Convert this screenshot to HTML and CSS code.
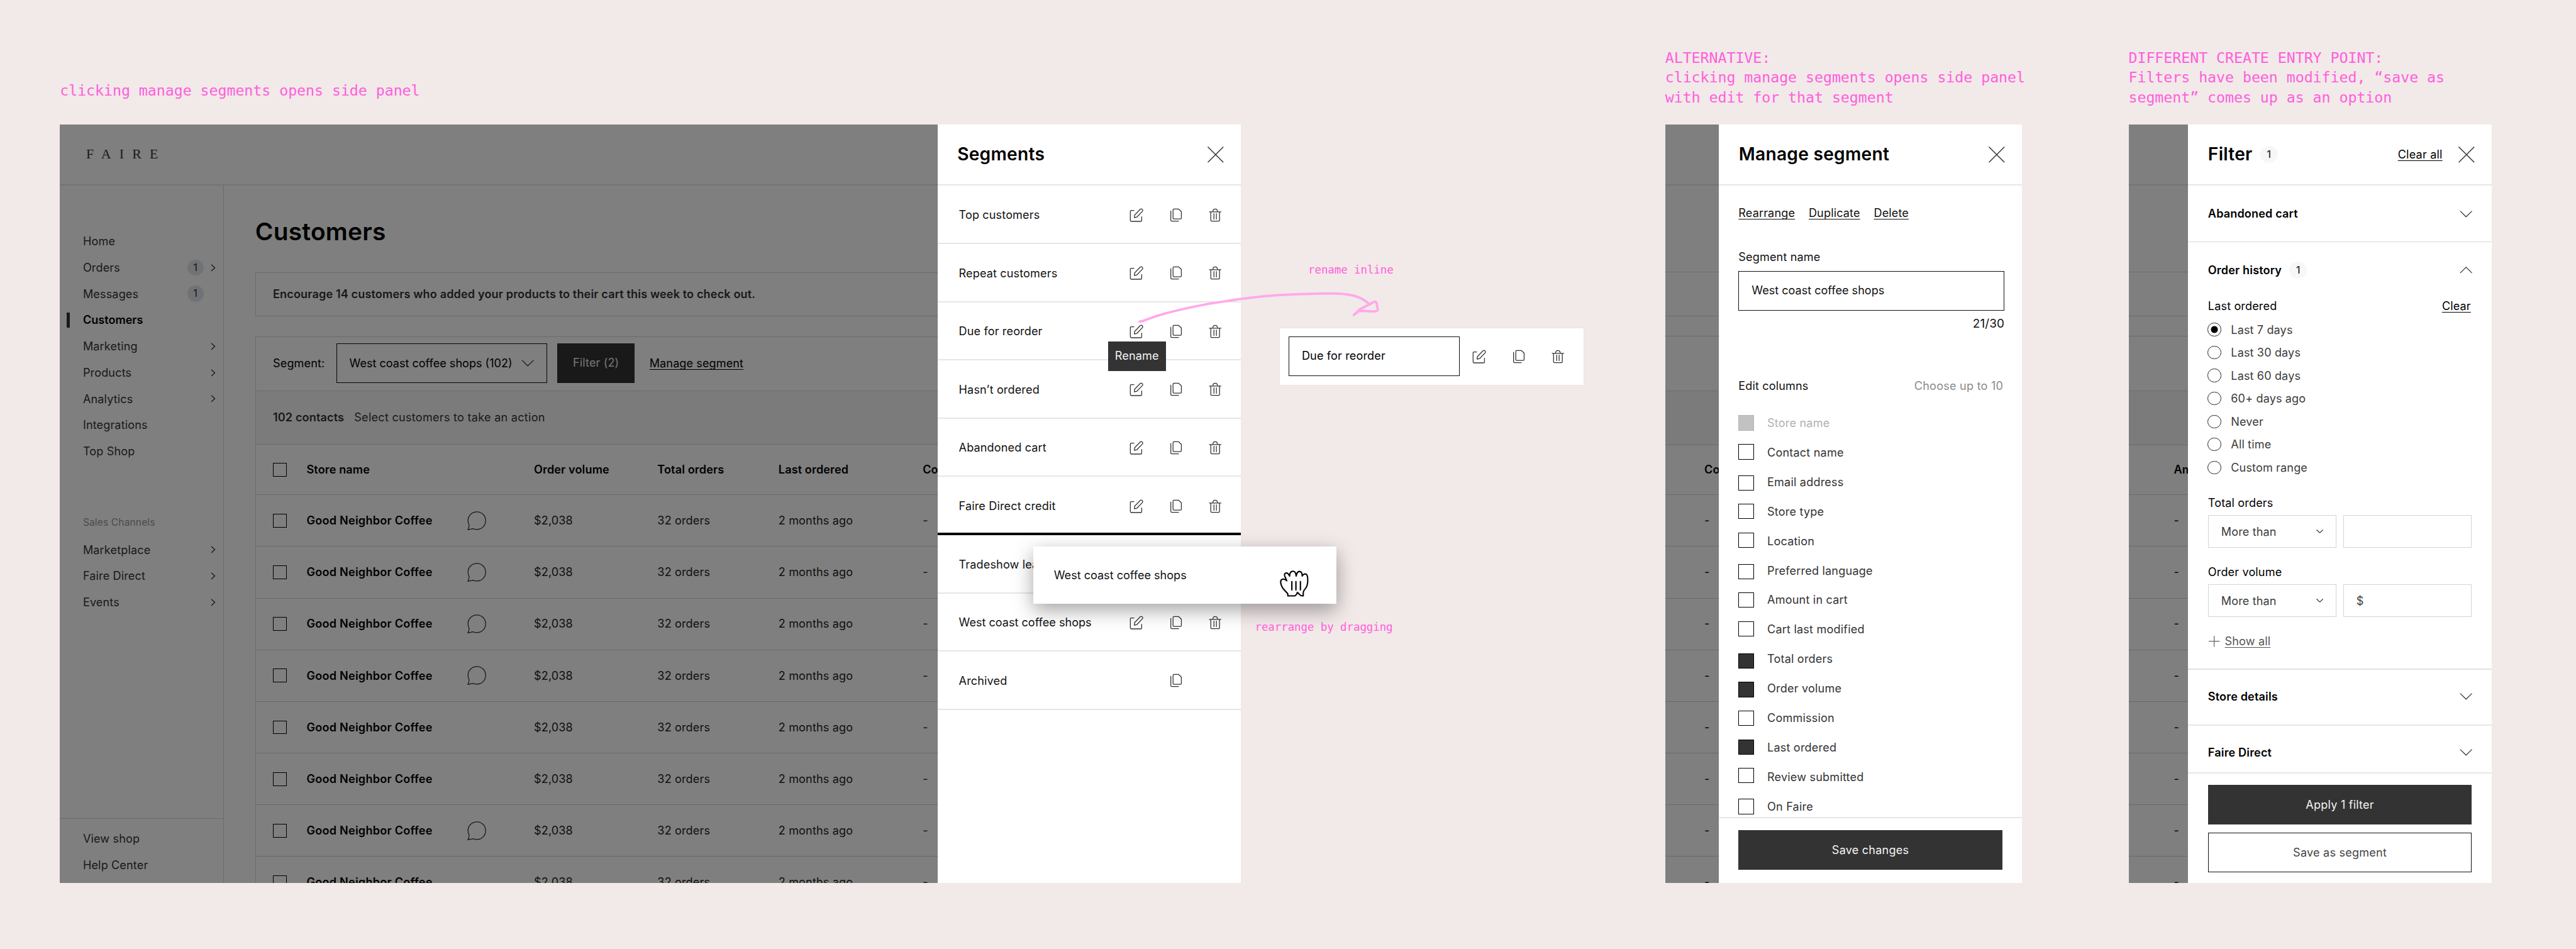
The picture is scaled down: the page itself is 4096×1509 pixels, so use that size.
FILE: index.html
```html
<!DOCTYPE html>
<html lang="en">
<head>
<meta charset="utf-8">
<title>Segments – side panel explorations</title>
<link rel="stylesheet" href="styles.css">
</head>
<body>
<svg class="sprite" aria-hidden="true">
  <symbol id="edit" viewBox="0 0 70 68"><path d="M22 11H8Q4 11 4 15V60Q4 65 9 65H55Q60 65 60 61V42M24 47L25 34L52 6Q57 1 63 6Q67 11 63 16L36 44Z"/></symbol>
  <symbol id="copy" viewBox="0 0 62 68"><path d="M21 4H43L57 17V48Q57 53 52 53H21Q16 53 16 48V9Q16 4 21 4ZM5 14V59Q5 64 10 64H43"/></symbol>
  <symbol id="trash" viewBox="0 0 63 68"><path d="M3 18H60M20 18Q20 4 31.500 4Q43 4 43 18M10 18V60Q10 64 14 64H49Q53 64 53 60V18M25.500 27V54M37.500 27V54"/></symbol>
  <symbol id="close" viewBox="0 0 27 27"><path d="M.5.5L26.500 26.500M26.500.5L.5 26.500"/></symbol>
  <symbol id="right" viewBox="0 0 8 12"><path d="M1 .7L6.800 6L1 11.300"/></symbol>
  <symbol id="down" viewBox="0 0 22 12"><path d="M.5.7L11 11L21.500.7"/></symbol>
  <symbol id="up" viewBox="0 0 22 12"><path d="M.5 11.300L11 1L21.500 11.300"/></symbol>
  <symbol id="chat" viewBox="0 0 32 32"><path d="M1 31C3 27.500 3.500 25.500 2.800 22.500C1.500 19.500 1.200 18 1.200 15.500C1.400 7 8 1 16.500 1C25 1 31 7.500 31 15.800C31 24.500 24.500 30.600 16.500 30.600C14 30.600 12 30.200 10 29.300C7.500 29.200 4.500 30.800 1 31Z"/></symbol>
</svg>

<main class="canvas">

  <p class="note n1">clicking manage segments opens side panel</p>
  <p class="note n2">ALTERNATIVE:<br>clicking manage segments opens side panel<br>with edit for that segment</p>
  <p class="note n3">DIFFERENT CREATE ENTRY POINT:<br>Filters have been modified, “save as<br>segment” comes up as an option</p>

  <section class="frame f1">
    <div class="app dim">
      <header class="topbar"><span class="logo">FAIRE</span></header>
      <div class="body">
        <nav class="side">
          <ul class="nav">
            <li>Home</li>
            <li>Orders<i class="count">1</i><svg class="chev"><use href="#right"/></svg></li>
            <li>Messages<i class="count">1</i></li>
            <li class="on">Customers</li>
            <li>Marketing<svg class="chev"><use href="#right"/></svg></li>
            <li>Products<svg class="chev"><use href="#right"/></svg></li>
            <li>Analytics<svg class="chev"><use href="#right"/></svg></li>
            <li>Integrations</li>
            <li>Top Shop</li>
          </ul>
          <div class="navhead">Sales Channels</div>
          <ul class="nav">
            <li>Marketplace<svg class="chev"><use href="#right"/></svg></li>
            <li>Faire Direct<svg class="chev"><use href="#right"/></svg></li>
            <li>Events<svg class="chev"><use href="#right"/></svg></li>
          </ul>
          <ul class="nav foot"><li>View shop</li><li>Help Center</li></ul>
        </nav>
        <div class="content">
          <h1>Customers</h1>
          <div class="banner">Encourage 14 customers who added your products to their cart this week to check out.</div>
          <div class="table">
            <div class="tools">
              <span class="seglabel">Segment:</span>
              <span class="select">West coast coffee shops (102)<svg class="down"><use href="#down"/></svg></span>
              <span class="filterbtn">Filter (2)</span>
              <a class="link">Manage segment</a>
            </div>
            <div class="summary"><b>102 contacts</b><span>Select customers to take an action</span></div>
            <div class="row head"><i class="box"></i><b>Store name</b><s></s><b>Order volume</b><b>Total orders</b><b>Last ordered</b><b>Co</b></div>
            <div class="row"><i class="box"></i><b>Good Neighbor Coffee</b><svg class="chat"><use href="#chat"/></svg><span>$2,038</span><span>32 orders</span><span>2 months ago</span><span>-</span></div>
            <div class="row"><i class="box"></i><b>Good Neighbor Coffee</b><svg class="chat"><use href="#chat"/></svg><span>$2,038</span><span>32 orders</span><span>2 months ago</span><span>-</span></div>
            <div class="row"><i class="box"></i><b>Good Neighbor Coffee</b><svg class="chat"><use href="#chat"/></svg><span>$2,038</span><span>32 orders</span><span>2 months ago</span><span>-</span></div>
            <div class="row"><i class="box"></i><b>Good Neighbor Coffee</b><svg class="chat"><use href="#chat"/></svg><span>$2,038</span><span>32 orders</span><span>2 months ago</span><span>-</span></div>
            <div class="row"><i class="box"></i><b>Good Neighbor Coffee</b><s></s><span>$2,038</span><span>32 orders</span><span>2 months ago</span><span>-</span></div>
            <div class="row"><i class="box"></i><b>Good Neighbor Coffee</b><s></s><span>$2,038</span><span>32 orders</span><span>2 months ago</span><span>-</span></div>
            <div class="row"><i class="box"></i><b>Good Neighbor Coffee</b><svg class="chat"><use href="#chat"/></svg><span>$2,038</span><span>32 orders</span><span>2 months ago</span><span>-</span></div>
            <div class="row"><i class="box"></i><b>Good Neighbor Coffee</b><s></s><span>$2,038</span><span>32 orders</span><span>2 months ago</span><span>-</span></div>
          </div>
        </div>
      </div>
    </div>
    <aside class="panel segments">
      <header class="phead"><h2>Segments</h2><svg class="x"><use href="#close"/></svg></header>
      <div class="seg"><span>Top customers</span><svg class="e"><use href="#edit"/></svg><svg class="c"><use href="#copy"/></svg><svg class="t"><use href="#trash"/></svg></div>
      <div class="seg"><span>Repeat customers</span><svg class="e"><use href="#edit"/></svg><svg class="c"><use href="#copy"/></svg><svg class="t"><use href="#trash"/></svg></div>
      <div class="seg"><span>Due for reorder</span><svg class="e"><use href="#edit"/></svg><svg class="c"><use href="#copy"/></svg><svg class="t"><use href="#trash"/></svg><em class="tip">Rename</em></div>
      <div class="seg"><span>Hasn’t ordered</span><svg class="e"><use href="#edit"/></svg><svg class="c"><use href="#copy"/></svg><svg class="t"><use href="#trash"/></svg></div>
      <div class="seg"><span>Abandoned cart</span><svg class="e"><use href="#edit"/></svg><svg class="c"><use href="#copy"/></svg><svg class="t"><use href="#trash"/></svg></div>
      <div class="seg drop"><span>Faire Direct credit</span><svg class="e"><use href="#edit"/></svg><svg class="c"><use href="#copy"/></svg><svg class="t"><use href="#trash"/></svg></div>
      <div class="seg"><span>Tradeshow leads</span></div>
      <div class="seg"><span class="tight">West coast coffee shops</span><svg class="e"><use href="#edit"/></svg><svg class="c"><use href="#copy"/></svg><svg class="t"><use href="#trash"/></svg></div>
      <div class="seg"><span>Archived</span><s></s><svg class="c"><use href="#copy"/></svg></div>
    </aside>
  </section>

  <div class="dragcard"><span class="tight">West coast coffee shops</span>
    <svg class="hand" viewBox="0 0 140 130"><path d="M39 125V114Q25 100 15 88Q4 70 4 56Q4 45 13 43Q24 41 34 51L24 28Q20 16 29 13Q41 11 48 28Q48 4 65 4Q79 5 80 28Q84 5 97 5Q110 7 110 28Q112 20 124 17Q138 17 137 50Q137 76 125 90Q115 101 115 110V125Q102 126 96 118Q90 110 86 108Q82 122 72 125Z"/><path d="M59 55V96M79 55V96M101 55V96"/></svg>
  </div>
  <p class="note small n4">rename inline</p>
  <p class="note small n5">rearrange by dragging</p>
  <svg class="arrow" viewBox="0 0 1380 870"><path d="M163 603C190 602 200 587 290 563C390 537 480 518 560 507C670 489 780 475 900 470C1000 466 1060 465 1100 465C1190 465 1250 475 1293 520M1215 570C1235 555 1240 540 1265 532C1290 520 1300 515 1310 508C1330 498 1328 520 1329 525C1335 550 1335 552 1315 553C1290 555 1270 547 1240 552L1215 570"/></svg>

  <div class="inlinecard">
    <span class="inlineinput">Due for reorder</span>
    <svg class="e"><use href="#edit"/></svg><svg class="c"><use href="#copy"/></svg><svg class="t"><use href="#trash"/></svg>
  </div>

  <section class="frame f2">
    <div class="slice dim">
      <div class="topbar"></div><div class="s-gap"></div><div class="s-banner"></div><div class="s-tools"></div><div class="s-sum"></div>
      <div class="srow head"><b>Co</b></div>
      <div class="srow">-</div><div class="srow">-</div><div class="srow">-</div><div class="srow">-</div><div class="srow">-</div><div class="srow">-</div><div class="srow">-</div><div class="srow">-</div>
    </div>
    <aside class="panel manage">
      <header class="phead"><h2>Manage segment</h2><svg class="x"><use href="#close"/></svg></header>
      <div class="mbody">
        <div class="links"><a class="link">Rearrange</a><a class="link">Duplicate</a><a class="link">Delete</a></div>
        <label class="mlabel">Segment name</label>
        <div class="minput tight">West coast coffee shops</div>
        <div class="mcount">21/30</div>
        <div class="mcols"><span>Edit columns</span><span class="hint">Choose up to 10</span></div>
        <ul class="checks">
          <li class="off"><i></i>Store name</li>
          <li class="up1"><i></i>Contact name</li>
          <li class="dn1"><i></i>Email address</li>
          <li><i></i>Store type</li>
          <li class="up1"><i></i>Location</li>
          <li class="dn1"><i></i>Preferred language</li>
          <li><i></i>Amount in cart</li>
          <li class="up1"><i></i>Cart last modified</li>
          <li class="dn3 full"><i></i>Total orders</li>
          <li class="dn1 full"><i></i>Order volume</li>
          <li><i></i>Commission</li>
          <li class="up1 full"><i></i>Last ordered</li>
          <li class="up3"><i></i>Review submitted</li>
          <li><i></i>On Faire</li>
        </ul>
      </div>
      <footer class="mfoot"><span class="btn">Save changes</span></footer>
    </aside>
  </section>

  <section class="frame f3">
    <div class="slice dim">
      <div class="topbar"></div><div class="s-gap"></div><div class="s-banner"></div><div class="s-tools"></div><div class="s-sum"></div>
      <div class="srow head"><b>Amount</b></div>
      <div class="srow">-</div><div class="srow">-</div><div class="srow">-</div><div class="srow">-</div><div class="srow">-</div><div class="srow">-</div><div class="srow">-</div><div class="srow">-</div>
    </div>
    <aside class="panel filter">
      <header class="phead"><h2>Filter</h2><i class="pill">1</i><a class="link">Clear all</a><svg class="x"><use href="#close"/></svg></header>
      <div class="acc a1"><b>Abandoned cart</b><svg class="down"><use href="#down"/></svg></div>
      <div class="history">
        <div class="acc open"><b>Order history</b><i class="pill">1</i><svg class="down"><use href="#up"/></svg></div>
        <div class="flabel last"><span>Last ordered</span><a class="link">Clear</a></div>
        <ul class="radios">
          <li class="sel"><i></i>Last 7 days</li>
          <li><i></i>Last 30 days</li>
          <li><i></i>Last 60 days</li>
          <li><i></i>60+ days ago</li>
          <li><i></i>Never</li>
          <li><i></i>All time</li>
          <li><i></i>Custom range</li>
        </ul>
        <div class="flabel">Total orders</div>
        <div class="pair"><span>More than<svg class="mini"><use href="#down"/></svg></span><span></span></div>
        <div class="flabel">Order volume</div>
        <div class="pair"><span>More than<svg class="mini"><use href="#down"/></svg></span><span>$</span></div>
        <div class="showall"><svg viewBox="0 0 19 19"><path d="M0 9.500H19M9.500 0V19"/></svg><a class="link">Show all</a></div>
      </div>
      <div class="acc a2"><b>Store details</b><svg class="down"><use href="#down"/></svg></div>
      <div class="acc a3"><b>Faire Direct</b><svg class="down"><use href="#down"/></svg></div>
      <footer class="ffoot"><span class="btn">Apply 1 filter</span><span class="btn ghost">Save as segment</span></footer>
    </aside>
  </section>
</main>
</body>
</html>
```

FILE: styles.css
```css
* { box-sizing: border-box; margin: 0; padding: 0; }
html { background: #f2e9e9; overflow: hidden; }
body {
  zoom: 0.972;
  font: 400 18.6px/26px Inter, "Liberation Sans", sans-serif;
  letter-spacing: 0.14px;
  color: #000;
}
ul { list-style: none; }
i, em { font-style: normal; }
s { text-decoration: none; }
b { font-weight: 600; letter-spacing: 0.15px; }
svg { fill: none; stroke: #333; stroke-width: 1.35; flex: none; display: block; overflow: visible; }
.sprite { position: absolute; width: 0; height: 0; }
.tight { letter-spacing: 0; }
.canvas { position: relative; width: 4214px; height: 1552px; background: #f2e9e9; overflow: hidden; }

/* annotations and boards placed freely on the canvas */
.note { position: absolute; font: 400 24px/32.3px "DejaVu Sans Mono", monospace; letter-spacing: -0.08px; color: #ff5fdc; white-space: nowrap; }
.n1 { left: 98px; top: 132px; }
.n2 { left: 2724px; top: 78px; }
.n3 { left: 3482px; top: 78px; }
.small { font-size: 18px; line-height: 24px; letter-spacing: -0.1px; }
.n4 { left: 2140px; top: 430px; }
.n5 { left: 2053px; top: 1014.500px; }
.arrow { position: absolute; left: 1810px; top: 325px; width: 460px; height: 290px; stroke: #ffa8ea; stroke-width: 11.500; stroke-linecap: round; stroke-linejoin: round; }

.frame { position: absolute; top: 204px; height: 1240.400px; display: flex; overflow: hidden; }
.f1 { left: 98px; width: 1932px; }
.f2 { left: 2724px; width: 584px; }
.f3 { left: 3482px; width: 594px; }
.dim { position: relative; background: #fff; overflow: hidden; }
.dim::after { content: ""; position: absolute; inset: 0; background: rgba(0, 0, 0, .5); }
.app { flex: 1; min-width: 0; }

.topbar { height: 100px; border-bottom: 2.100px solid #e6e6e6; display: flex; align-items: center; padding-left: 43px; }
.logo { font: 400 22.500px/30px "Liberation Serif", serif; letter-spacing: 13.600px; color: #333; }
.body { display: flex; height: 1140px; }
.side { width: 268.500px; border-right: 1.400px solid #d8d8d8; display: flex; flex-direction: column; padding-top: 69.500px; }
.nav li { height: 42.950px; display: flex; align-items: center; padding: 0 12.500px 0 37.700px; color: #333; }
.nav .on { position: relative; color: #000; font-weight: 600; letter-spacing: 0; }
.nav .on::before { content: ""; position: absolute; left: 11px; top: 9.500px; width: 5.500px; height: 24px; background: #333; }
.chev { width: 8px; height: 12px; margin-left: auto; }
.count { width: 26.500px; height: 26.500px; border-radius: 50%; background: #e0e5ec; text-align: center; font-size: 17px; margin-left: auto; margin-right: 20px; }
.count + .chev { margin-left: -8px; }
.navhead { margin-top: 81px; height: 28px; line-height: 28px; padding-left: 37.700px; font-size: 16px; color: #999; margin-bottom: 9px; }
.foot { margin-top: auto; border-top: 1.400px solid #d8d8d8; height: 106px; padding-top: 12px; }

.content { flex: 1; min-width: 0; padding-left: 51px; }
h1 { font-size: 40px; line-height: 50px; font-weight: 600; letter-spacing: 0.25px; margin-top: 50px; }
.banner { height: 72px; margin-top: 41.500px; border: 1.400px solid #d6d6d6; border-right: 0; padding-left: 28px; line-height: 69px; font-weight: 600; letter-spacing: 0.15px; color: #333; white-space: nowrap; }
.table { margin-top: 33px; border: 1.400px solid #d6d6d6; border-right: 0; width: 1200px; }
.tools { height: 87.500px; display: flex; align-items: center; padding: 0 0 2.500px 28px; color: #000; }
.seglabel { width: 103.500px; }
.select { width: 345px; height: 64.400px; border: 1.800px solid #111; display: flex; align-items: center; padding: 0 20px 0 20.500px; justify-content: space-between; white-space: nowrap; letter-spacing: 0; }
.down { width: 21px; height: 11px; }
.filterbtn { margin-left: 17px; width: 126px; height: 64.400px; line-height: 63px; background: #333; color: #e8e8e8; text-align: center; }
.link { text-decoration: underline; text-decoration-thickness: 1.400px; text-underline-offset: 3.500px; text-decoration-skip-ink: none; white-space: nowrap; }
.tools .link { margin-left: 24.500px; letter-spacing: 0.1px; }
.summary { height: 88.600px; border-top: 1.400px solid #d6d6d6; border-bottom: 1.400px solid #d6d6d6; background: #f7f7f7; display: flex; align-items: center; padding-left: 28px; color: #333; letter-spacing: 0.28px; }
.summary b { width: 133px; }
.row { height: 84.550px; border-bottom: 1.400px solid #d2d2d2; display: grid; grid-template-columns: 55px 263px 109px 202px 198px 236px 1fr; align-items: center; padding-left: 28px; white-space: nowrap; }
.row span { color: #222; }
.row b { letter-spacing: 0.25px; }
.row.head { height: 82.300px; }
.row.head b { letter-spacing: 0.13px; }
.box { width: 22.500px; height: 22.500px; border: 1.800px solid #000; }
.chat { width: 31px; height: 31px; }

.panel { background: #fff; position: relative; flex: none; }
.segments { width: 496.500px; }
.phead { height: 100px; border-bottom: 2.100px solid #e6e6e6; display: flex; align-items: center; }
h2 { font-size: 29px; line-height: 36px; font-weight: 600; letter-spacing: 0.25px; white-space: nowrap; }
.x { width: 26.500px; height: 26.500px; margin-left: auto; stroke-width: 1.500; }
.segments .phead { padding: 0 28.500px 0 32.500px; }
.seg { position: relative; height: 95.250px; border-bottom: 2.100px solid #e6e6e6; display: grid; grid-template-columns: 1fr 64.400px 64.400px 64.400px; align-items: center; justify-items: center; padding: 2px 9.500px 0 35px; color: #111; white-space: nowrap; }
.seg span { justify-self: start; }
.drop { border-bottom: 4.200px solid #000; padding-top: 4px; }
.e { width: 23.300px; height: 22.600px; }
.c { width: 20.700px; height: 22.600px; }
.t { width: 21px; height: 22.600px; }
.e, .c, .t { stroke-width: 4; stroke: #333; stroke-linejoin: round; stroke-linecap: round; }
.tip { position: absolute; z-index: 2; left: 279px; top: 64px; width: 94.500px; height: 48.500px; line-height: 47px; text-align: center; background: #333; color: #f4f4f4; }

.dragcard { position: absolute; left: 1690px; top: 894px; width: 496.500px; height: 94px; background: #fff; color: #111; box-shadow: 0 10px 30px rgba(0, 0, 0, .36); display: flex; justify-content: space-between; align-items: center; padding: 1px 46.500px 0 34px; }
.hand { width: 46.700px; height: 43.300px; margin-top: 27px; stroke: #000; stroke-width: 6.500; stroke-linejoin: round; stroke-linecap: round; }
.inlinecard { position: absolute; left: 2093px; top: 535.500px; width: 499px; height: 95px; background: #fff; border: 1.100px solid #ebe5e5; display: grid; grid-template-columns: 1fr 64.400px 64.400px 64.400px; align-items: center; justify-items: center; padding: 0 10px 0 14.500px; }
.inlineinput { justify-self: start; width: 279px; height: 65px; border: 1.800px solid #111; padding-left: 20px; line-height: 60px; }

.slice { flex: 1; }
.s-gap { height: 142px; border-bottom: 1.400px solid #d6d6d6; }
.s-banner { height: 71.500px; border-bottom: 1.400px solid #d6d6d6; }
.s-tools { height: 122px; border-bottom: 1.400px solid #d6d6d6; padding-top: 32px; }
.s-tools::before { content: ""; display: block; border-top: 1.400px solid #d6d6d6; }
.s-sum { height: 88.600px; background: #f7f7f7; border-bottom: 1.400px solid #d6d6d6; }
.srow { height: 84.550px; border-bottom: 1.400px solid #d2d2d2; padding-left: 64px; display: flex; align-items: center; }
.srow.head { height: 81.800px; padding-bottom: 1px; }
.f3 .srow { padding-left: 74px; }

.manage { width: 496.500px; display: flex; flex-direction: column; }
.manage .phead { padding: 0 28.500px 0 33px; flex: none; }
.mbody { flex: 1; min-height: 0; overflow: hidden; padding: 31px 29px 0 32.500px; color: #111; }
.links { display: flex; gap: 22.500px; }
.mlabel { display: block; margin-top: 46.500px; }
.minput { margin-top: 10px; height: 64.400px; border: 1.800px solid #111; padding-left: 20.500px; line-height: 60px; }
.mcount { text-align: right; margin-top: 8.500px; font-size: 19.500px; }
.mcols { display: flex; justify-content: space-between; margin-top: 76px; }
.hint { color: #8a8a8a; padding-right: 2px; letter-spacing: 0.25px; }
.checks { margin-top: 23.500px; letter-spacing: 0.2px; }
.checks li { height: 48.280px; display: flex; align-items: center; gap: 22px; color: #333; white-space: nowrap; }
.checks li i { width: 25px; height: 25px; border: 1.800px solid #000; position: relative; }
.checks .off { color: #b0b0b0; }
.checks .off i { background: #c2c2c2; border-color: #b5b5b5; }
.checks .full i { background: #333; }
.up1 i { top: -1px; }
.up3 i { top: -2.500px; }
.dn1 i { top: 1.600px; }
.dn3 i { top: 3px; }
.mfoot { flex: none; height: 107.500px; border-top: 2.100px solid #e6e6e6; padding: 19px 32.500px 0; }
.btn { display: flex; align-items: center; justify-content: center; height: 64.400px; background: #333; color: #f4f4f4; letter-spacing: 0.22px; }

.filter { width: 496.500px; display: flex; flex-direction: column; }
.filter .phead { padding: 0 28px 0 32.500px; flex: none; }
.pill { width: 29px; height: 28px; border-radius: 50%; background: #f7f7f7; color: #333; text-align: center; line-height: 28px; font-size: 17px; font-weight: 500; margin-left: 12.500px; }
.phead .link { margin-left: auto; letter-spacing: 0.2px; }
.phead .link + .x { margin-left: 26px; }
.acc { display: flex; align-items: center; padding: 0 31.500px 0 32.500px; flex: none; }
.acc .down { margin-left: auto; }
.a1 { height: 92.500px; border-bottom: 1.400px solid #d8d8d8; }
.open { height: 91px; }
.history { height: 699px; border-bottom: 2.100px solid #e2e2e2; flex: none; }
.flabel { padding: 0 34px 0 32.500px; line-height: 26px; height: 33px; }
.last { display: flex; justify-content: space-between; }
.radios { padding-left: 32px; height: 289.500px; }
.radios li { height: 37.570px; display: flex; align-items: center; gap: 16px; color: #3c3c3c; }
.radios i { width: 22px; height: 22px; border-radius: 50%; border: 1.800px solid #222; }
.radios .sel i { background: radial-gradient(circle, #000 5.300px, #fff 6px); }
.pair { display: grid; grid-template-columns: 1fr 1fr; gap: 11px; padding: 0 32.500px; height: 80px; }
.pair span { height: 53.500px; border: 1.400px solid #d4d4d4; display: flex; align-items: center; justify-content: space-between; padding: 0 20.500px; color: #3c3c3c; }
.mini { width: 11.500px; height: 6px; stroke-width: 2.600; }
.showall { display: flex; align-items: center; gap: 8px; padding-left: 34px; height: 26px; color: #555; }
.showall svg { width: 18px; height: 18px; stroke: #666; }
.a2 { height: 91.500px; border-bottom: 2.100px solid #e6e6e6; padding-bottom: 1px; }
.a3 { flex: 1; padding-top: 11px; }
.ffoot { flex: none; height: 181px; border-top: 2.100px solid #e6e6e6; padding: 19px 32.500px 0; display: flex; flex-direction: column; gap: 13.500px; }
.ghost { background: #fff; border: 1.800px solid #111; color: #444; }
```
